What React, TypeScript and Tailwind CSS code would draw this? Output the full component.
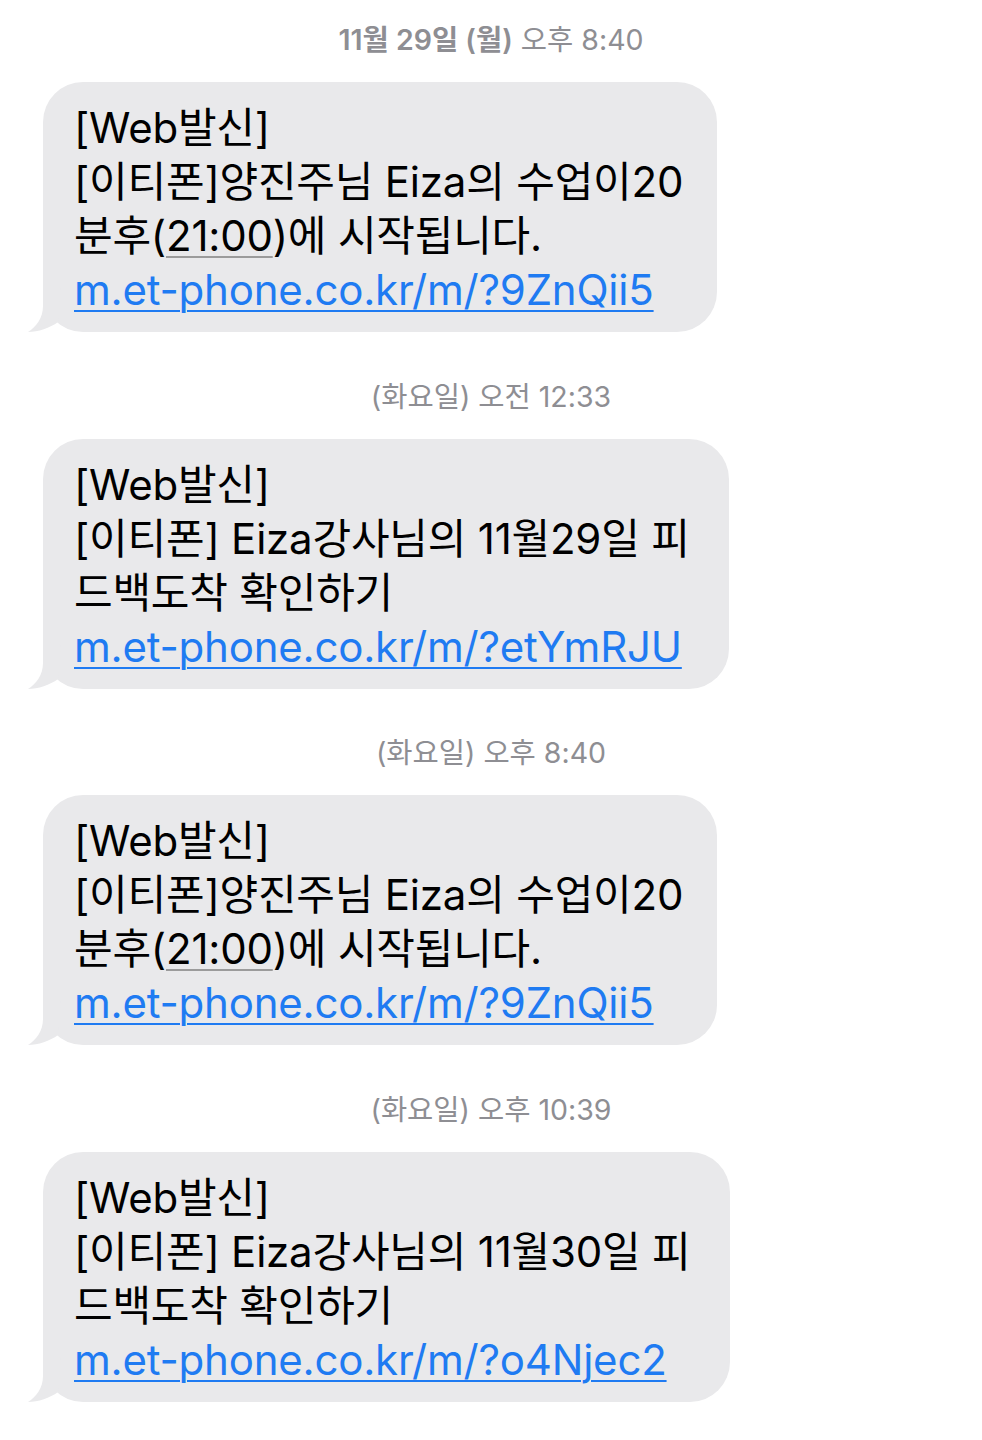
import React from "react";

type Msg = {
  time: React.ReactNode;
  width: string;
  lines: React.ReactNode[];
  link: string;
};

const Tail = () => (
  <svg
    className="absolute left-[-15px] bottom-0"
    width="34"
    height="50"
    viewBox="0 0 34 50"
  >
    <path
      d="M15,2 L15,24 C15,36 8,45 0,50 C10,50 22,46 30,40 L33,6 Z"
      fill="#e9e9eb"
    />
  </svg>
);

const Under = ({ children }: { children: React.ReactNode }) => (
  <span className="underline decoration-[#9b9b9b] decoration-[2px] underline-offset-[5px]">
    {children}
  </span>
);

const msgs: Msg[] = [
  {
    time: (
      <>
        <span className="font-semibold">11월 29일 (월)</span> 오후 8:40
      </>
    ),
    width: "w-[674px]",
    lines: [
      "[Web발신]",
      "[이티폰]양진주님 Eiza의 수업이20",
      <>
        분후(<Under>21:00</Under>)에 시작됩니다.
      </>,
    ],
    link: "m.et-phone.co.kr/m/?9ZnQii5",
  },
  {
    time: "(화요일) 오전 12:33",
    width: "w-[686px]",
    lines: ["[Web발신]", "[이티폰] Eiza강사님의 11월29일 피", "드백도착 확인하기"],
    link: "m.et-phone.co.kr/m/?etYmRJU",
  },
  {
    time: "(화요일) 오후 8:40",
    width: "w-[674px]",
    lines: [
      "[Web발신]",
      "[이티폰]양진주님 Eiza의 수업이20",
      <>
        분후(<Under>21:00</Under>)에 시작됩니다.
      </>,
    ],
    link: "m.et-phone.co.kr/m/?9ZnQii5",
  },
  {
    time: "(화요일) 오후 10:39",
    width: "w-[687px]",
    lines: ["[Web발신]", "[이티폰] Eiza강사님의 11월30일 피", "드백도착 확인하기"],
    link: "m.et-phone.co.kr/m/?o4Njec2",
  },
];

export default function App() {
  return (
    <div
      className="w-[982px] min-h-[1440px] bg-white pt-[23px]"
      style={{ fontFamily: '"Inter", "Noto Sans CJK KR", sans-serif' }}
    >
      {msgs.map((m, i) => (
        <div key={i} className="flex flex-col mb-[47.5px]">
          <div className="h-[34px] leading-[34px] text-center text-[28.5px] text-[#8e8e93]">
            {m.time}
          </div>
          <div
            className={`relative mt-[25px] ml-[43px] ${m.width} rounded-[40px] bg-[#e9e9eb] pl-[31px] pt-[19px] pb-[15px] text-[42px] leading-[54px] text-black tracking-[-0.005em]`}
          >
            <Tail />
            {m.lines.map((l, j) => (
              <div key={j} className="relative whitespace-nowrap">
                {l}
              </div>
            ))}
            <div className="relative whitespace-nowrap text-[#1f7bf2] underline decoration-[2px] underline-offset-[5px]">
              {m.link}
            </div>
          </div>
        </div>
      ))}
    </div>
  );
}
